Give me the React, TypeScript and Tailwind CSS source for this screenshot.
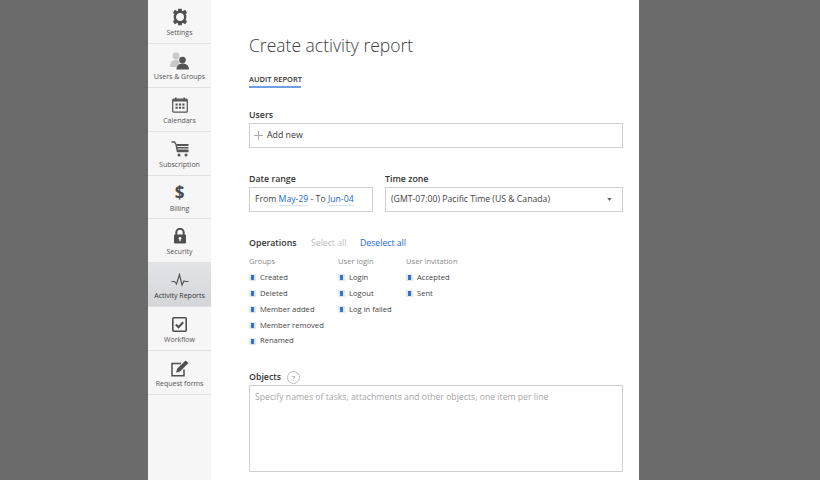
import React from "react";

const font = { fontFamily: '"Open Sans", sans-serif' };

const icons: Record<string, React.ReactNode> = {
  Settings: (
    <svg width="18" height="18" viewBox="0 0 18 18">
      <circle cx="9" cy="9" r="5.200" fill="none" stroke="#4f4f4f" strokeWidth="2.400" />
      <path d="M7.200 .8h3.600l.4 3H6.800zM7.200 17.200h3.600l.4-3H6.800zM1.900 4.900l1.800-3.100 2.800 1.500-2.200 3zM16.100 13.100l-1.800 3.100-2.800-1.500 2.200-3zM16.100 4.900l-1.800-3.100-2.800 1.500 2.200 3zM1.900 13.100l1.800 3.100 2.800-1.500-2.200-3z" fill="#4f4f4f" />
    </svg>
  ),
  "Users & Groups": (
    <svg width="20" height="18" viewBox="0 0 20 18">
      <circle cx="6" cy="4" r="3.400" fill="#c9c9c9" />
      <path d="M0 14c0-4 2.500-6 6-6 2 0 3 .5 4 1.500L7 15H1z" fill="#c9c9c9" />
      <circle cx="12.500" cy="8" r="3.300" fill="#555" />
      <path d="M6.500 17.500c0-4 2.500-6 6-6s6.500 2 6.500 6z" fill="#555" />
    </svg>
  ),
  Calendars: (
    <svg width="16" height="16" viewBox="0 0 16 16">
      <rect x=".7" y="2.200" width="14.600" height="13" rx="1" fill="none" stroke="#555" strokeWidth="1.200" />
      <rect x="1" y="2.500" width="14" height="2" fill="#555" />
      <rect x="3" y=".5" width="1.600" height="3" fill="#555" />
      <rect x="11.400" y=".5" width="1.600" height="3" fill="#555" />
      <path d="M3.500 6.500h2.200v2H3.500zM6.900 6.500h2.200v2H6.900zM10.300 6.500h2.200v2h-2.200zM3.500 9.800h2.200v2H3.500zM6.900 9.800h2.200v2H6.900zM10.300 9.800h2.200v2h-2.200z" fill="#555" />
    </svg>
  ),
  Subscription: (
    <svg width="18" height="16" viewBox="0 0 18 16">
      <path d="M.5 1h3l1.500 2.500 1.500 7h11" fill="none" stroke="#555" strokeWidth="1.400" />
      <path d="M5.500 3h12v2h-12zM6 6h11.500v1.500H6zM6.500 8.500h11V10h-11z" fill="#555" />
      <circle cx="8" cy="14" r="1.500" fill="#555" />
      <circle cx="15" cy="14" r="1.500" fill="#555" />
    </svg>
  ),
  Security: (
    <svg width="14" height="16" viewBox="0 0 14 16">
      <path d="M3.300 7V4.500a3.700 3.700 0 0 1 7.400 0V7" fill="none" stroke="#4f4f4f" strokeWidth="2" />
      <rect x="1" y="6.500" width="12" height="9" rx="1" fill="#4f4f4f" />
      <circle cx="7" cy="10.300" r="1.300" fill="#fff" />
      <rect x="6.400" y="10.500" width="1.200" height="2.700" fill="#fff" />
    </svg>
  ),
  "Activity Reports": (
    <svg width="18" height="14" viewBox="0 0 18 14">
      <path d="M.5 8.500h3L5.500 11 8.500 1.500 11 12l2-4 1.500.5h3" fill="none" stroke="#555" strokeWidth="1.200" />
    </svg>
  ),
  Workflow: (
    <svg width="15" height="15" viewBox="0 0 15 15">
      <rect x=".8" y=".8" width="13.400" height="13.400" rx="1" fill="none" stroke="#4f4f4f" strokeWidth="1.600" />
      <path d="M3.800 7.500l2.700 2.700 4.700-5" fill="none" stroke="#4f4f4f" strokeWidth="2" />
    </svg>
  ),
  "Request forms": (
    <svg width="18" height="17" viewBox="0 0 18 17">
      <path d="M13 9.500V15.800H1V3.500h9" fill="none" stroke="#4f4f4f" strokeWidth="1.500" />
      <path d="M14.500.5L17.500 3 9 11.500l-4 1.200 1.200-4z" fill="#4f4f4f" />
    </svg>
  ),
};

const nav = ["Settings", "Users & Groups", "Calendars", "Subscription", "Billing", "Security", "Activity Reports", "Workflow", "Request forms"];

function Check({ label }: { label: string }) {
  return (
    <div className="flex h-[15.800px] items-center text-[7.600px] text-[#444]">
      <span className="mr-[4px] flex h-[7px] w-[7px] items-center justify-center bg-[#e4e6ea]">
        <span className="h-[5px] w-[3.500px] bg-[#2f74c9]" />
      </span>
      {label}
    </div>
  );
}

function Column({ title, items, className }: { title: string; items: string[]; className: string }) {
  return (
    <div className={className}>
      <div className="h-[15px] text-[7.600px] leading-[12px] text-[#8a8a8a]">{title}</div>
      {items.map((i) => (
        <Check key={i} label={i} />
      ))}
    </div>
  );
}

export default function App() {
  return (
    <div className="flex h-[480px] w-[820px] overflow-hidden bg-[#6b6b6b] pl-[148px]" style={font}>
      <div className="flex h-[480px] w-[491px] bg-white">
        <aside className="h-full w-[63px] shrink-0 bg-[#f6f6f7]">
          {nav.map((n) => (
            <div
              key={n}
              className={`flex h-[43.900px] flex-col items-center border-b border-[#e0e0e2] pt-[8px] ${
                n === "Activity Reports" ? "bg-gradient-to-b from-[#e3e4e7] to-[#d4d5d9]" : ""
              }`}
            >
              <div className="flex h-[18px] items-center justify-center">
                {n === "Billing" ? (
                  <span className="text-[17px] leading-[18px] font-bold text-[#4a4a4a]">$</span>
                ) : (
                  icons[n]
                )}
              </div>
              <div className={`mt-[1px] whitespace-nowrap text-[7px] leading-[11px] ${n === "Activity Reports" ? "text-[#333]" : "text-[#555]"}`}>
                {n}
              </div>
            </div>
          ))}
        </aside>
        <main className="flex-1 pl-[38px] pr-[16px] pt-[32px]">
          <h1 className="h-[26px] text-[17.500px] leading-[26px] font-light text-[#3d3d3d]">Create activity report</h1>
          <div className="mt-[16px] w-[52px] border-b-2 border-[#6f9fe3] pb-[1px] text-[7.500px] leading-[11px] font-semibold whitespace-nowrap text-[#333]">
            AUDIT REPORT
          </div>
          <div className="mt-[20px] text-[8.800px] leading-[14px] font-semibold text-[#333]">Users</div>
          <div className="mt-[1px] flex h-[25px] items-center border border-[#cfcfcf] pl-[4px] text-[8.800px] text-[#333]">
            <svg width="9" height="9" viewBox="0 0 9 9" className="mr-[4px]">
              <path d="M4.500 0v9M0 4.500h9" stroke="#aaa" strokeWidth="1" />
            </svg>
            Add new
          </div>
          <div className="mt-[24px] flex gap-[12px]">
            <div className="w-[124px]">
              <div className="text-[8.800px] leading-[14px] font-semibold text-[#333]">Date range</div>
              <div className="mt-[1px] flex h-[25px] items-center border border-[#cfcfcf] pl-[5px] text-[8.700px] whitespace-nowrap text-[#444]">
                From&nbsp;<span className="border-b border-[#d5e3f5] leading-[11px] text-[#1769d6]">May-29</span>&nbsp;- To&nbsp;<span className="border-b border-[#d5e3f5] leading-[11px] text-[#1769d6]">Jun-04</span>
              </div>
            </div>
            <div className="flex-1">
              <div className="text-[8.800px] leading-[14px] font-semibold text-[#333]">Time zone</div>
              <div className="mt-[1px] flex h-[25px] items-center justify-between border border-[#cfcfcf] pr-[10px] pl-[5px] text-[8.700px] text-[#444]">
                (GMT-07:00) Pacific Time (US &amp; Canada)
                <svg width="5" height="3" viewBox="0 0 6 4">
                  <path d="M0 0h6L3 4z" fill="#666" />
                </svg>
              </div>
            </div>
          </div>
          <div className="mt-[24px] flex items-center text-[8.700px] leading-[14px]">
            <span className="w-[62px] text-[8.800px] font-semibold text-[#333]">Operations</span>
            <span className="w-[49px] text-[#bdbdbd]">Select all</span>
            <span className="text-[#1769d6]">Deselect all</span>
          </div>
          <div className="mt-[5px] flex">
            <Column className="w-[89px]" title="Groups" items={["Created", "Deleted", "Member added", "Member removed", "Renamed"]} />
            <Column className="w-[68px]" title="User login" items={["Login", "Logout", "Log in failed"]} />
            <Column className="" title="User invitation" items={["Accepted", "Sent"]} />
          </div>
          <div className="mt-[22px] flex h-[14px] items-center text-[8.800px] font-semibold text-[#333]">
            Objects
            <span className="ml-[6px] flex h-[13px] w-[13px] items-center justify-center rounded-full border border-[#bbb] text-[8px] font-normal text-[#888]">?</span>
          </div>
          <div className="h-[87px] border border-[#cfcfcf] px-[5px] py-[4px] text-[8.700px] leading-[14px] text-[#a5a5a5]">
            Specify names of tasks, attachments and other objects, one item per line
          </div>
        </main>
      </div>
    </div>
  );
}
